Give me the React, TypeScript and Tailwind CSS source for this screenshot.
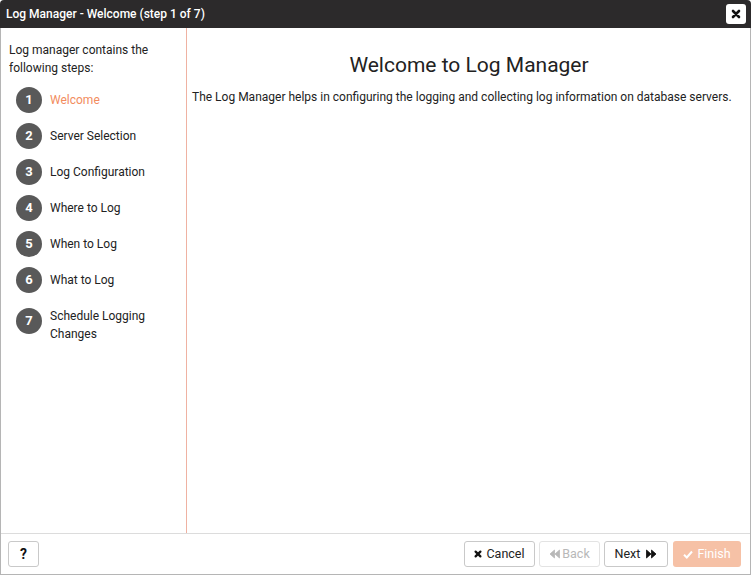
import React from "react";

const steps = [
  "Welcome",
  "Server Selection",
  "Log Configuration",
  "Where to Log",
  "When to Log",
  "What to Log",
];

function Circle({ n }: { n: number }) {
  return (
    <div className="w-[26px] h-[26px] rounded-full bg-[#595959] flex items-center justify-center text-white text-[13px] font-bold shrink-0">
      {n}
    </div>
  );
}

export default function App() {
  return (
    <div
      className="w-[751px] h-[575px] flex flex-col bg-white overflow-hidden"
      style={{ fontFamily: "Roboto, 'Liberation Sans', sans-serif" }}
    >
      <div className="h-[28px] bg-[#2c2a2b] rounded-t-[4px] flex items-center justify-between pl-[6px] pr-[5px] shrink-0">
        <span className="text-white text-[12px] font-medium">
          Log Manager - Welcome (step 1 of 7)
        </span>
        <div className="w-[20px] h-[20px] bg-white rounded-[3px] flex items-center justify-center">
          <svg width="10" height="10" viewBox="0 0 10 10">
            <path d="M2 2 L8 8 M8 2 L2 8" stroke="#111" strokeWidth="2.6" strokeLinecap="round" />
          </svg>
        </div>
      </div>
      <div className="flex-1 flex flex-col border-x border-b border-[#b5b5b5] min-h-0">
        <div className="flex-1 flex min-h-0">
          <div className="w-[186px] border-r border-[#efb2a2] pt-[13px] pl-[8px] shrink-0">
            <div className="text-[12px] leading-[18px] text-[#222]">
              Log manager contains the
              <br />
              following steps:
            </div>
            <div className="mt-[5px] pl-[7px]">
              {steps.map((s, i) => (
                <div key={s} className="h-[36px] flex items-center gap-[8px]">
                  <Circle n={i + 1} />
                  <span
                    className={
                      "text-[12px] " + (i === 0 ? "text-[#f28c5e]" : "text-[#222]")
                    }
                  >
                    {s}
                  </span>
                </div>
              ))}
              <div className="flex items-start gap-[8px] pt-[9px]">
                <div className="mt-[1px]">
                  <Circle n={7} />
                </div>
                <span className="text-[12px] leading-[18px] text-[#222]">
                  Schedule Logging
                  <br />
                  Changes
                </span>
              </div>
            </div>
          </div>
          <div className="flex-1 pl-[5px] pr-[4px] pt-[24px]">
            <div className="text-center text-[21px] leading-[26px] text-[#222]">
              Welcome to Log Manager
            </div>
            <div className="mt-[10px] text-[12px] leading-[18px] text-[#222]">
              The Log Manager helps in configuring the logging and collecting log information on database servers.
            </div>
          </div>
        </div>
        <div className="h-[41px] border-t border-[#dcdcdc] flex items-center justify-between pl-[7px] pr-[9px] shrink-0">
          <button className="w-[31px] h-[26px] border border-[#c9c9c9] rounded-[3px] flex items-center justify-center text-[14px] font-bold text-[#111]">
            ?
          </button>
          <div className="flex items-center gap-[4px]">
            <button className="w-[71px] h-[26px] border border-[#c9c9c9] rounded-[3px] flex items-center justify-center gap-[4px] text-[12.5px] text-[#222]">
              <svg width="8" height="8" viewBox="0 0 10 10">
                <path d="M2 2 L8 8 M8 2 L2 8" stroke="#111" strokeWidth="2.8" strokeLinecap="round" />
              </svg>
              Cancel
            </button>
            <button className="w-[61px] h-[26px] border border-[#e3e3e3] rounded-[3px] flex items-center justify-center gap-[2px] text-[12.5px] text-[#b8b8b8]">
              <svg width="11" height="10" viewBox="0 0 11 10">
                <path d="M5.5 1 L1 5 L5.5 9 Z M10.5 1 L6 5 L10.5 9 Z" fill="#b8b8b8" stroke="#b8b8b8" strokeWidth="0.8" strokeLinejoin="round" />
              </svg>
              Back
            </button>
            <button className="w-[64px] h-[26px] border border-[#c9c9c9] rounded-[3px] flex items-center justify-center gap-[6px] text-[12.5px] text-[#222]">
              Next
              <svg width="11" height="10" viewBox="0 0 11 10">
                <path d="M0.5 1 L5 5 L0.5 9 Z M5.5 1 L10 5 L5.5 9 Z" fill="#111" stroke="#111" strokeWidth="0.8" strokeLinejoin="round" />
              </svg>
            </button>
            <button className="ml-[1px] w-[68px] h-[26px] rounded-[3px] bg-[#f6c1a6] flex items-center justify-center gap-[4px] text-[12.5px] text-white">
              <svg width="10" height="9" viewBox="0 0 10 9">
                <path d="M1 4.8 L3.8 7.5 L9 1.5" stroke="#fff" strokeWidth="2" fill="none" />
              </svg>
              Finish
            </button>
          </div>
        </div>
      </div>
    </div>
  );
}
